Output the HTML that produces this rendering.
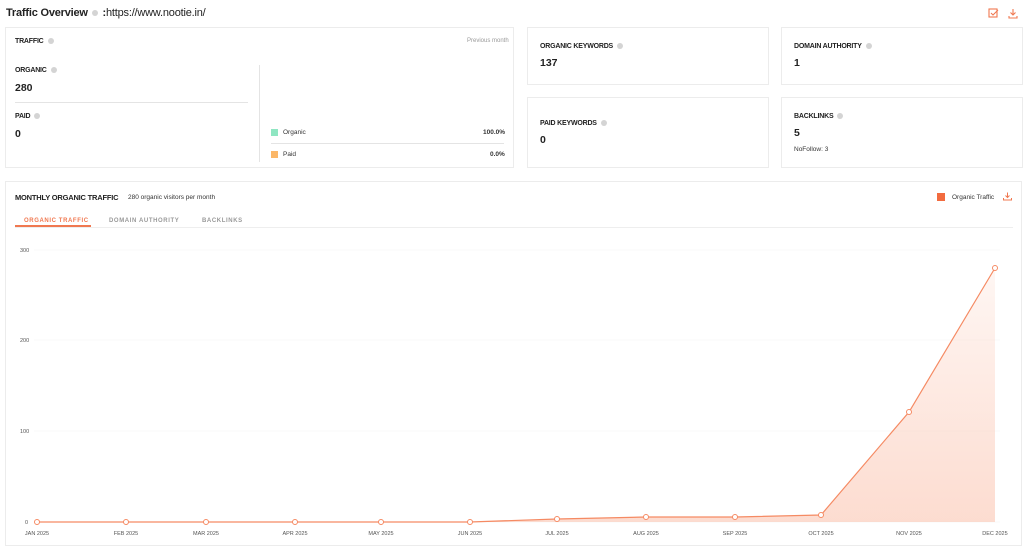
<!DOCTYPE html>
<html><head><meta charset="utf-8"><style>
*{margin:0;padding:0;box-sizing:border-box}
body{width:1024px;height:550px;background:#fff;font-family:"Liberation Sans",sans-serif;color:#222;position:relative;overflow:hidden}
.a{position:absolute}
.card{position:absolute;border:1px solid #ececec;background:#fff}
.lbl{font-size:7px;font-weight:bold;letter-spacing:-0.2px;color:#222}
.dot{display:inline-block;width:6px;height:6px;border-radius:50%;background:#d4d4d4;margin-left:4px;vertical-align:middle}
.val{font-size:10.5px;font-weight:bold}
.s{font-size:6.5px;color:#333}
</style></head><body>
<div class="a" style="left:6px;top:7px;font-size:11px;font-weight:bold;letter-spacing:-0.2px">Traffic Overview <span class="dot" style="margin:0 2px 0 1px"></span> <span style="font-weight:bold">:</span><span style="font-weight:normal">https://www.nootie.in/</span></div>
<svg class="a" style="left:988px;top:8px" width="30" height="11" viewBox="0 0 30 11" fill="none" stroke="#f07850" stroke-width="1.1"><rect x="1" y="1" width="8" height="8"/><path d="M3 5l2 2 5-5"/><path d="M25 1v6M22.5 4.5l2.5 2.5 2.5-2.5M21 8v2h8v-2"/></svg>

<div class="card" style="left:5px;top:27px;width:509px;height:141px"></div>
<div class="a lbl" style="left:15px;top:38px">TRAFFIC<span class="dot"></span></div>
<div class="a s" style="left:467px;top:38px;font-size:6px;color:#999">Previous month</div>
<div class="a lbl" style="left:15px;top:67px">ORGANIC<span class="dot"></span></div>
<div class="a val" style="left:15px;top:82px">280</div>
<div class="a" style="left:15px;top:102px;width:233px;height:1px;background:#e4e4e4"></div>
<div class="a lbl" style="left:15px;top:113px">PAID<span class="dot"></span></div>
<div class="a val" style="left:15px;top:128px">0</div>
<div class="a" style="left:259px;top:65px;width:1px;height:97px;background:#e4e4e4"></div>
<div class="a" style="left:271px;top:129px;width:7px;height:7px;background:#8fe6c2"></div>
<div class="a s" style="left:283px;top:129px">Organic</div>
<div class="a s" style="left:483px;top:129px;font-weight:bold">100.0%</div>
<div class="a" style="left:271px;top:143px;width:233px;height:1px;background:#e4e4e4"></div>
<div class="a" style="left:271px;top:151px;width:7px;height:7px;background:#fbb768"></div>
<div class="a s" style="left:283px;top:151px">Paid</div>
<div class="a s" style="left:490px;top:151px;font-weight:bold">0.0%</div>

<div class="card" style="left:527px;top:27px;width:242px;height:58px"></div>
<div class="a lbl" style="left:540px;top:43px">ORGANIC KEYWORDS<span class="dot"></span></div>
<div class="a val" style="left:540px;top:57px">137</div>
<div class="card" style="left:781px;top:27px;width:242px;height:58px"></div>
<div class="a lbl" style="left:794px;top:43px">DOMAIN AUTHORITY<span class="dot"></span></div>
<div class="a val" style="left:794px;top:57px">1</div>
<div class="card" style="left:527px;top:97px;width:242px;height:71px"></div>
<div class="a lbl" style="left:540px;top:120px">PAID KEYWORDS<span class="dot"></span></div>
<div class="a val" style="left:540px;top:134px">0</div>
<div class="card" style="left:781px;top:97px;width:242px;height:71px"></div>
<div class="a lbl" style="left:794px;top:113px">BACKLINKS<span class="dot"></span></div>
<div class="a val" style="left:794px;top:127px">5</div>
<div class="a s" style="left:794px;top:146px">NoFollow: 3</div>

<div class="card" style="left:5px;top:181px;width:1017px;height:365px"></div>
<div class="a lbl" style="left:15px;top:193px;font-size:7.5px">MONTHLY ORGANIC TRAFFIC</div>
<div class="a s" style="left:128px;top:194px">280 organic visitors per month</div>
<div class="a" style="left:937px;top:193px;width:8px;height:8px;background:#f26b3f"></div>
<div class="a s" style="left:952px;top:194px">Organic Traffic</div>
<svg class="a" style="left:1003px;top:192px" width="9" height="9" viewBox="0 0 9 9" fill="none" stroke="#f07850" stroke-width="1"><path d="M4.5 0.5v5M2.5 3.5l2 2 2-2M0.5 6v2h8v-2"/></svg>
<div class="a" style="left:24px;top:218px;font-size:6px;font-weight:bold;letter-spacing:0.6px;color:#f07850">ORGANIC TRAFFIC</div>
<div class="a" style="left:15px;top:225px;width:76px;height:2px;background:#f07850"></div>
<div class="a" style="left:109px;top:218px;font-size:6px;font-weight:bold;letter-spacing:0.6px;color:#999">DOMAIN AUTHORITY</div>
<div class="a" style="left:202px;top:218px;font-size:6px;font-weight:bold;letter-spacing:0.6px;color:#999">BACKLINKS</div>
<div class="a" style="left:15px;top:227px;width:998px;height:1px;background:#eee"></div>

<svg class="a" style="left:0;top:0" width="1024" height="550" font-family="Liberation Sans,sans-serif" font-size="5.5" fill="#555">
<defs><linearGradient id="g" x1="0" y1="0" x2="0" y2="1"><stop offset="0" stop-color="#f9a88a" stop-opacity="0.1"/><stop offset="1" stop-color="#f9a88a" stop-opacity="0.4"/></linearGradient></defs>
<g stroke="#f5f5f5" stroke-width="0.6"><line x1="34" y1="250" x2="1000" y2="250"/><line x1="34" y1="340" x2="1000" y2="340"/><line x1="34" y1="431" x2="1000" y2="431"/><line x1="34" y1="522" x2="1000" y2="522"/></g>
<text x="20" y="252">300</text><text x="20" y="342">200</text><text x="20" y="433">100</text><text x="25" y="524">0</text>
<path d="M37 522L126 522L206 522L295 522L381 522L470 522L557 519L646 517L735 517L821 515L909 412L995 268L995 522Z" fill="url(#g)"/>
<polyline points="37,522 126,522 206,522 295,522 381,522 470,522 557,519 646,517 735,517 821,515 909,412 995,268" fill="none" stroke="#f58a63" stroke-width="1.2"/>
<g fill="#fff" stroke="#f58a63" stroke-width="1"><circle cx="37" cy="522" r="2.5"/><circle cx="126" cy="522" r="2.5"/><circle cx="206" cy="522" r="2.5"/><circle cx="295" cy="522" r="2.5"/><circle cx="381" cy="522" r="2.5"/><circle cx="470" cy="522" r="2.5"/><circle cx="557" cy="519" r="2.5"/><circle cx="646" cy="517" r="2.5"/><circle cx="735" cy="517" r="2.5"/><circle cx="821" cy="515" r="2.5"/><circle cx="909" cy="412" r="2.5"/><circle cx="995" cy="268" r="2.5"/></g>
<g text-anchor="middle"><text x="37" y="535">JAN 2025</text><text x="126" y="535">FEB 2025</text><text x="206" y="535">MAR 2025</text><text x="295" y="535">APR 2025</text><text x="381" y="535">MAY 2025</text><text x="470" y="535">JUN 2025</text><text x="557" y="535">JUL 2025</text><text x="646" y="535">AUG 2025</text><text x="735" y="535">SEP 2025</text><text x="821" y="535">OCT 2025</text><text x="909" y="535">NOV 2025</text><text x="995" y="535">DEC 2025</text></g>
</svg>
</body></html>
